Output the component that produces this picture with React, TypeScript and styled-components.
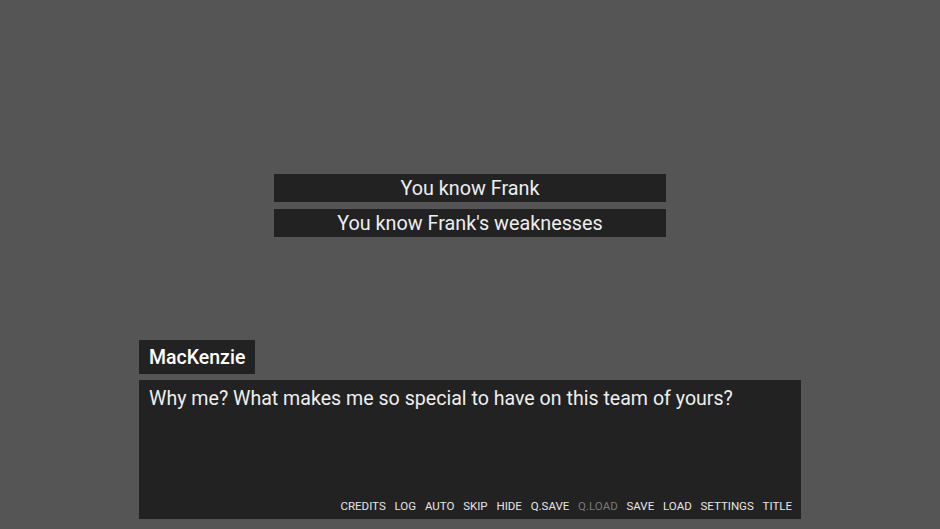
import React from "react";
import styled, { createGlobalStyle } from "styled-components";

const Global = createGlobalStyle`
  html, body { margin: 0; padding: 0; background: #555555; }
  body { font-family: Roboto, "Noto Sans", sans-serif; }
  * { box-sizing: border-box; }
`;

const Screen = styled.div`
  width: 940px;
  height: 529px;
  background: #555555;
  display: flex;
  flex-direction: column;
  align-items: center;
  overflow: hidden;
`;

const ChoiceList = styled.div`
  margin-top: 174px;
  display: flex;
  flex-direction: column;
  gap: 7px;
`;

const Choice = styled.div`
  width: 392px;
  height: 28px;
  padding-top: 1px;
  background: #222222;
  color: #eeeeee;
  font-size: 19.8px;
  line-height: 27px;
  text-align: center;
`;

const Dialogue = styled.div`
  margin-top: 103px;
  width: 662px;
  display: flex;
  flex-direction: column;
  align-items: flex-start;
  gap: 6px;
`;

const NameBox = styled.div`
  height: 34px;
  padding: 1px 10px 0;
  background: #222222;
  color: #ffffff;
  font-size: 19.5px;
  font-weight: 500;
  line-height: 33px;
`;

const TextBox = styled.div`
  width: 662px;
  height: 139px;
  background: #222222;
  display: flex;
  flex-direction: column;
  justify-content: space-between;
  padding: 6px 9px 6px 10px;
`;

const Line = styled.div`
  color: #eeeeee;
  font-size: 19.6px;
  line-height: 26px;
`;

const QuickMenu = styled.div`
  display: flex;
  justify-content: flex-end;
  gap: 8.8px;
`;

const QuickItem = styled.span<{ $disabled?: boolean }>`
  font-size: 11.5px;
  line-height: 14px;
  color: ${(p) => (p.$disabled ? "#7a7a7a" : "#e6e6e6")};
`;

const items: [string, boolean][] = [
  ["CREDITS", false],
  ["LOG", false],
  ["AUTO", false],
  ["SKIP", false],
  ["HIDE", false],
  ["Q.SAVE", false],
  ["Q.LOAD", true],
  ["SAVE", false],
  ["LOAD", false],
  ["SETTINGS", false],
  ["TITLE", false],
];

export default function App() {
  return (
    <>
      <Global />
      <Screen>
        <ChoiceList>
          <Choice>You know Frank</Choice>
          <Choice>You know Frank's weaknesses</Choice>
        </ChoiceList>
        <Dialogue>
          <NameBox>MacKenzie</NameBox>
          <TextBox>
            <Line>Why me? What makes me so special to have on this team of yours?</Line>
            <QuickMenu>
              {items.map(([label, dis]) => (
                <QuickItem key={label} $disabled={dis}>
                  {label}
                </QuickItem>
              ))}
            </QuickMenu>
          </TextBox>
        </Dialogue>
      </Screen>
    </>
  );
}
